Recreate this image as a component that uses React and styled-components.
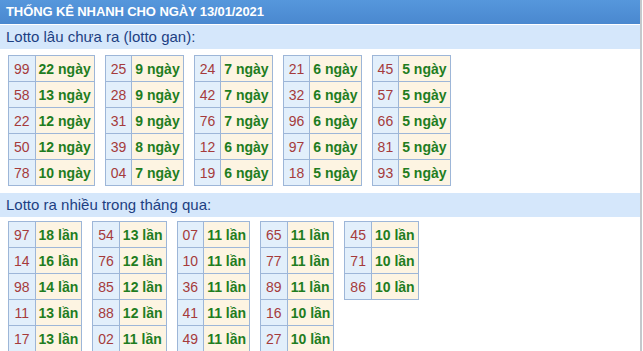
import styled, { createGlobalStyle } from "styled-components";

const ganTables = [
  [["99", "22"], ["58", "13"], ["22", "12"], ["50", "12"], ["78", "10"]],
  [["25", "9"], ["28", "9"], ["31", "9"], ["39", "8"], ["04", "7"]],
  [["24", "7"], ["42", "7"], ["76", "7"], ["12", "6"], ["19", "6"]],
  [["21", "6"], ["32", "6"], ["96", "6"], ["97", "6"], ["18", "5"]],
  [["45", "5"], ["57", "5"], ["66", "5"], ["81", "5"], ["93", "5"]],
];

const hotTables = [
  [["97", "18"], ["14", "16"], ["98", "14"], ["11", "13"], ["17", "13"]],
  [["54", "13"], ["76", "12"], ["85", "12"], ["88", "12"], ["02", "11"]],
  [["07", "11"], ["10", "11"], ["36", "11"], ["41", "11"], ["49", "11"]],
  [["65", "11"], ["77", "11"], ["89", "11"], ["16", "10"], ["27", "10"]],
  [["45", "10"], ["71", "10"], ["86", "10"]],
];

const StatTable = ({ rows, unit }) => (
  <Table>
    <tbody>
      {rows.map(([num, count]) => (
        <tr key={num}>
          <NumCell>{num}</NumCell>
          <CountCell>
            {count} {unit}
          </CountCell>
        </tr>
      ))}
    </tbody>
  </Table>
);

const App = () => (
  <>
    <GlobalStyle />
    <Box>
      <Header>THỐNG KÊ NHANH CHO NGÀY 13/01/2021</Header>
      <SubTitle>Lotto lâu chưa ra (lotto gan):</SubTitle>
      <TableRow>
        {ganTables.map((rows, i) => (
          <StatTable key={i} rows={rows} unit="ngày" />
        ))}
      </TableRow>
      <SubTitle $top={7}>Lotto ra nhiều trong tháng qua:</SubTitle>
      <TableRow $top={4}>
        {hotTables.map((rows, i) => (
          <StatTable key={i} rows={rows} unit="lần" />
        ))}
      </TableRow>
    </Box>
  </>
);

export default App;

// Styled Components
const GlobalStyle = createGlobalStyle`
  body {
    margin: 0;
    background: #fff;
    font-family: "Liberation Sans", Arial, sans-serif;
  }
`;

const Box = styled.div`
  width: 640px;
  height: 351px;
  overflow: hidden;
  border-right: 2px solid #c4c8cc;
`;

const Header = styled.div`
  height: 24px;
  line-height: 24px;
  padding-left: 6px;
  background: linear-gradient(#5697dc, #4a88cf);
  color: #fff;
  font-size: 13px;
  font-weight: bold;
  letter-spacing: -0.1px;
`;

const SubTitle = styled.div`
  margin-top: ${(p) => p.$top || 1}px;
  height: 24px;
  line-height: 24px;
  padding-left: 6px;
  background: #d5e7fb;
  color: #1d3f82;
  font-size: 15px;
`;

const TableRow = styled.div`
  display: flex;
  align-items: flex-start;
  gap: 10px;
  padding-left: 8px;
  margin-top: ${(p) => p.$top || 6}px;
`;

const Table = styled.table`
  border-collapse: collapse;
  font-size: 14px;

  td {
    height: 25px;
    border: 1px solid #9db6d8;
    white-space: nowrap;
  }
`;

const NumCell = styled.td`
  padding: 0 5px;
  background: #e2effb;
  color: #a53b3b;
  text-align: center;
`;

const CountCell = styled.td`
  padding: 0 3px;
  background: #fdf4e2;
  color: #1f7d1f;
  font-weight: bold;
`;
